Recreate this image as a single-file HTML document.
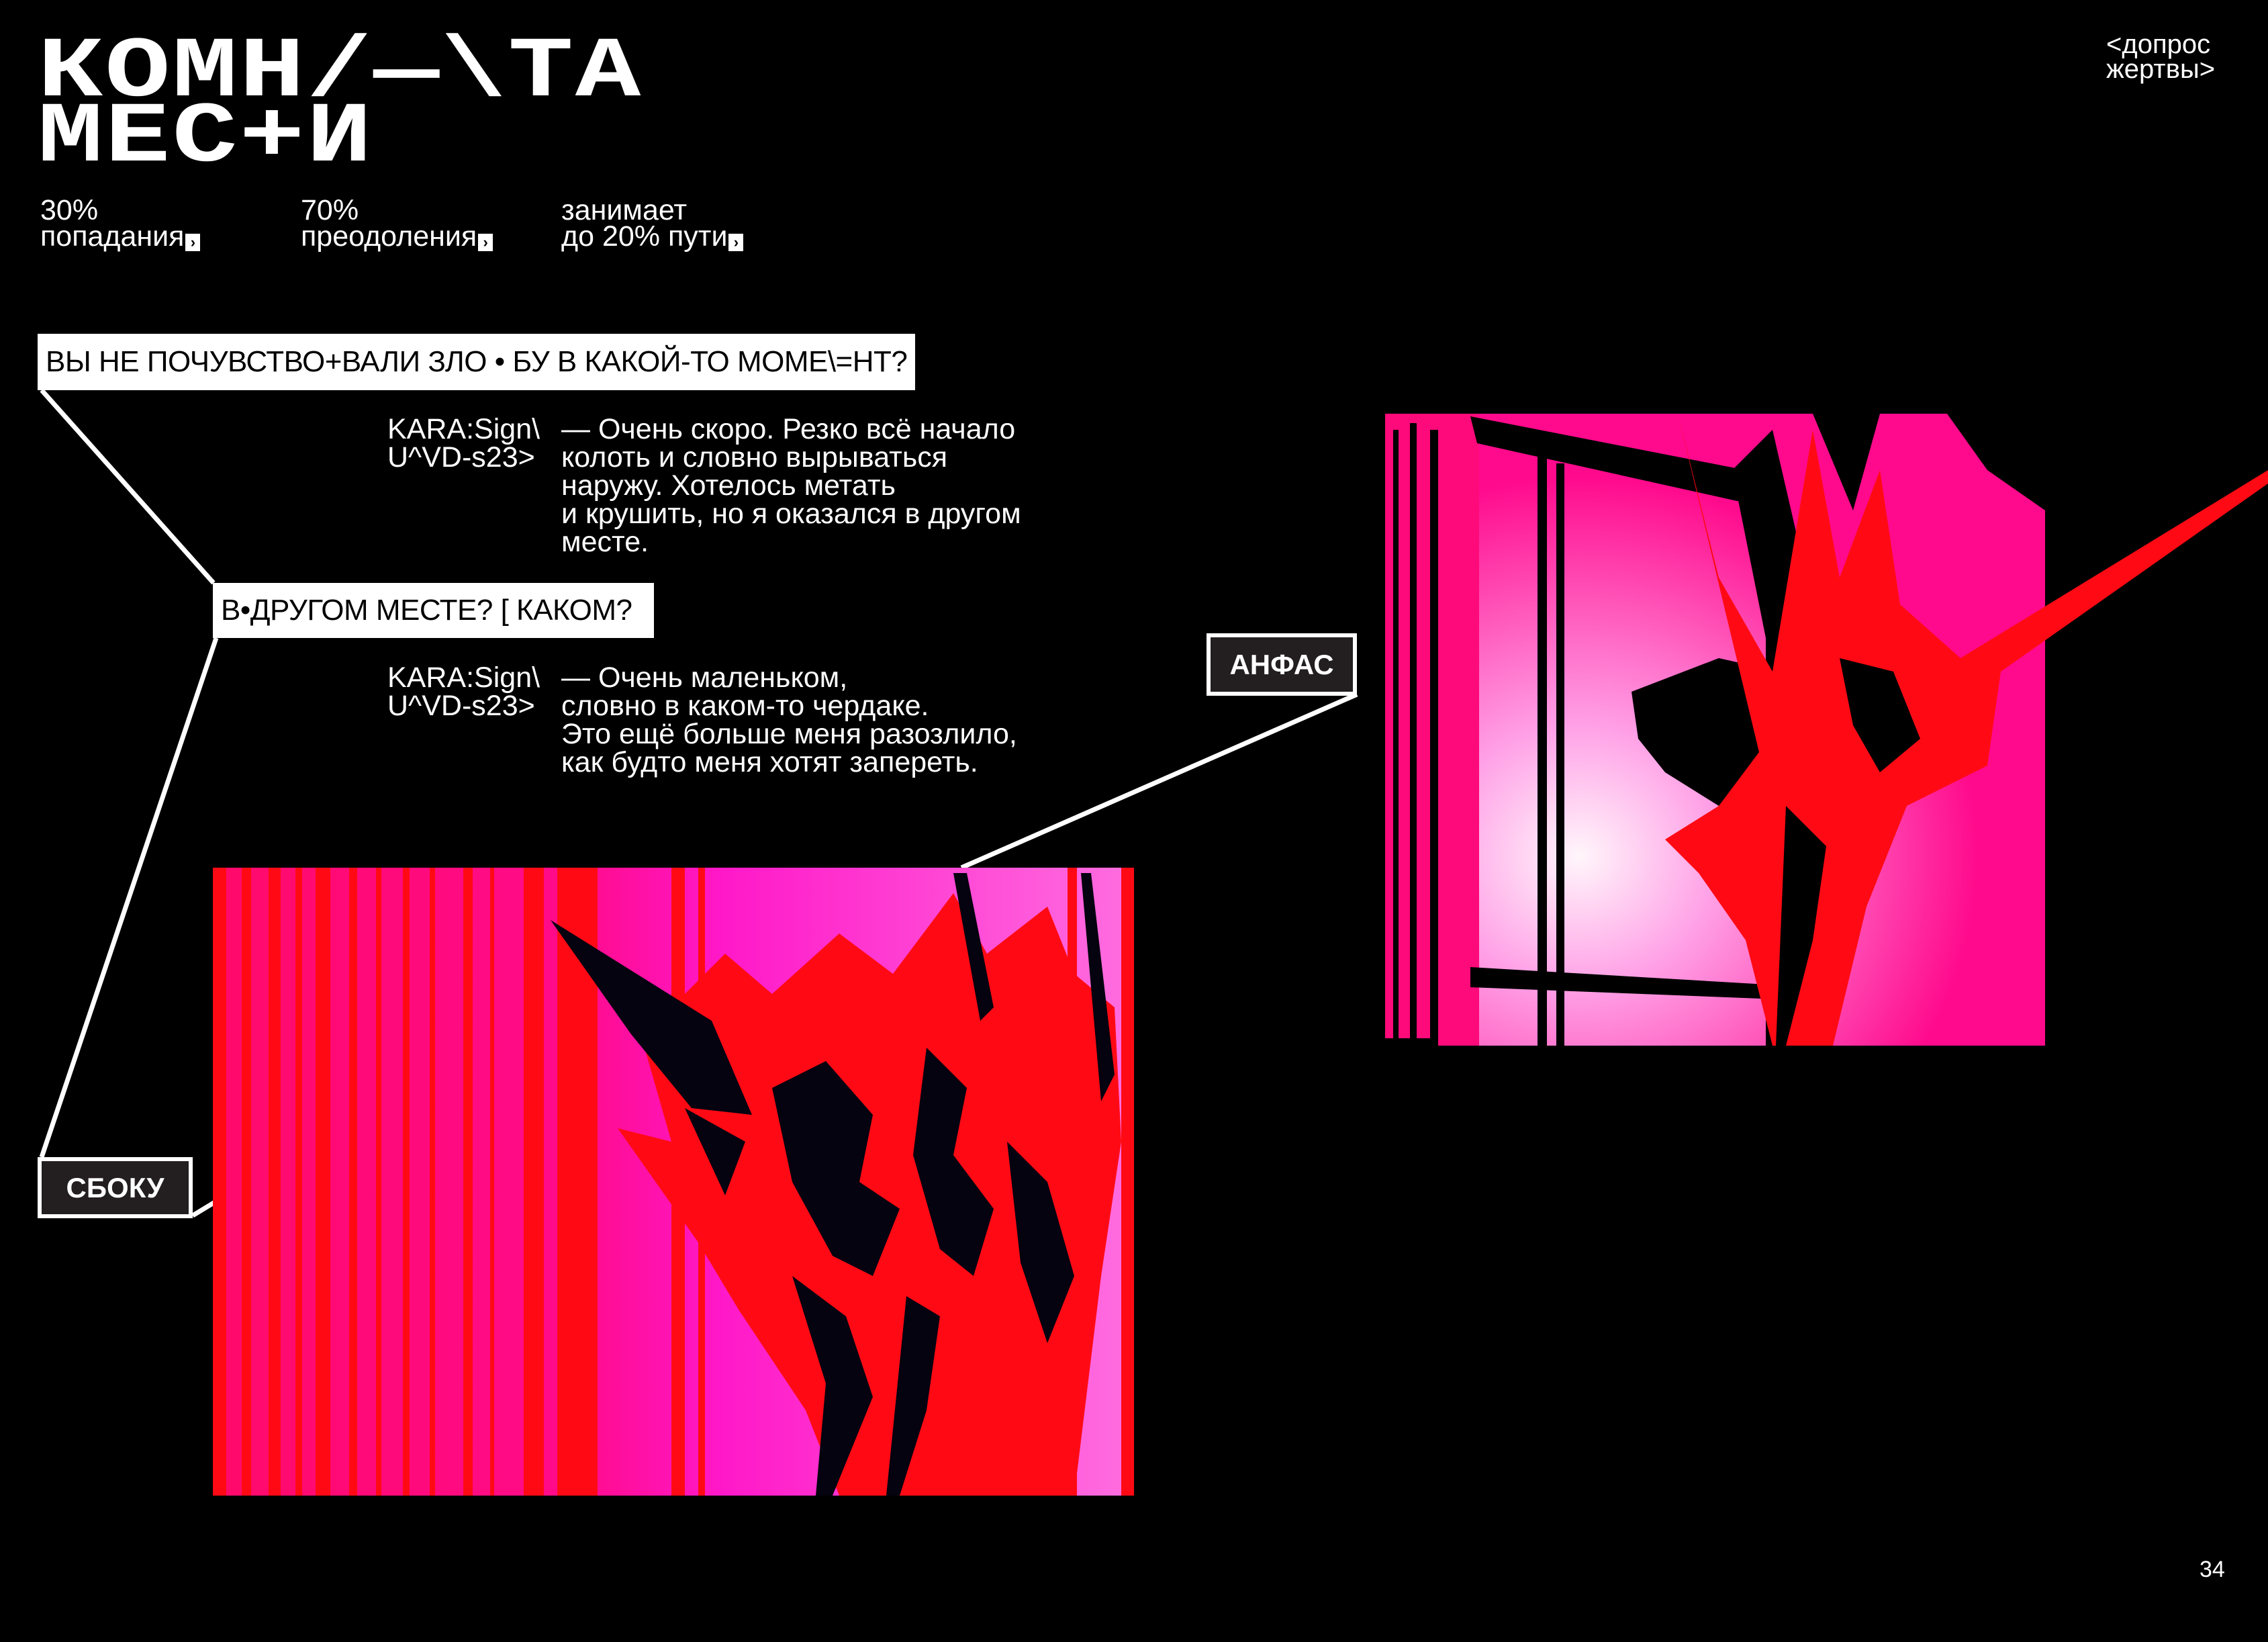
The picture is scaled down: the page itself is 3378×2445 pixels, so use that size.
<!DOCTYPE html>
<html><head><meta charset="utf-8">
<style>
html,body{margin:0;padding:0;background:#000;}
body{width:3378px;height:2445px;position:relative;overflow:hidden;font-family:"Liberation Sans","Noto Sans CJK SC",sans-serif;color:#fff;}
.a{position:absolute;white-space:nowrap;}
.title{font-family:"Liberation Mono","DejaVu Sans Mono",monospace;font-weight:bold;font-size:128px;line-height:97px;transform-origin:0 0;transform:scaleX(1.27);letter-spacing:2px;}
.st{font-size:43px;line-height:39px;}
.ar{display:inline-block;width:22px;height:26px;background:#fff;color:#000;font-size:22px;line-height:26px;text-align:center;font-weight:bold;vertical-align:-2px;margin-left:2px;}
.q{background:#fff;color:#000;font-size:44px;letter-spacing:-0.5px;box-sizing:border-box;padding-left:12px;display:flex;align-items:center;}
.ans{font-size:43px;line-height:42px;}
.lab{background:#231f20;border:6px solid #fff;box-sizing:border-box;font-weight:bold;font-size:42px;display:flex;align-items:center;justify-content:center;}
</style></head><body>

<svg class="a" style="left:0;top:0" width="3378" height="2445">
<defs>
<linearGradient id="g1" x1="0" y1="0" x2="1" y2="0">
<stop offset="0" stop-color="#ff0a6a"/><stop offset="0.4" stop-color="#ff0b8c"/><stop offset="0.55" stop-color="#ff18c8"/><stop offset="1" stop-color="#ff6ee0"/></linearGradient>
<radialGradient id="g2" cx="0.3" cy="0.7" r="0.6">
<stop offset="0" stop-color="#fff6fb"/><stop offset="0.35" stop-color="#ff9fe6"/><stop offset="1" stop-color="#ff0a8c"/></radialGradient>
</defs>
<polyline points="62,581 318,868" fill="none" stroke="#fff" stroke-width="7"/>
<polyline points="322,950 62,1723" fill="none" stroke="#fff" stroke-width="7"/>
<polyline points="287,1810 320,1790" fill="none" stroke="#fff" stroke-width="7"/>
<polyline points="2021,1034 1432,1292" fill="none" stroke="#fff" stroke-width="7"/>

<g>
<rect x="317" y="1292" width="1372" height="935" fill="url(#g1)"/>
<g fill="#ff0a14">
<rect x="317" y="1292" width="20" height="935"/><rect x="360" y="1292" width="14" height="935"/>
<rect x="400" y="1292" width="18" height="935"/><rect x="440" y="1292" width="10" height="935"/>
<rect x="470" y="1292" width="22" height="935"/><rect x="520" y="1292" width="12" height="935"/>
<rect x="560" y="1292" width="8" height="935"/><rect x="600" y="1292" width="10" height="935"/>
<rect x="640" y="1292" width="8" height="935"/><rect x="690" y="1292" width="14" height="935"/>
<rect x="730" y="1292" width="6" height="935"/><rect x="780" y="1292" width="30" height="935"/>
<rect x="830" y="1292" width="60" height="935"/><rect x="1000" y="1292" width="20" height="935"/>
<rect x="1040" y="1292" width="10" height="935"/><rect x="1590" y="1292" width="14" height="935"/>
<rect x="1670" y="1292" width="19" height="935"/>
</g>
<polygon fill="#ff0a14" points="820,1370 1000,1500 1080,1420 1150,1480 1250,1390 1330,1450 1420,1330 1470,1420 1560,1350 1600,1450 1660,1500 1670,1700 1640,1900 1600,2227 1250,2227 1200,2100 1100,1950 1040,1850 920,1680 1000,1700 960,1560"/>
<polygon fill="#05030f" points="820,1370 940,1540 1030,1650 1120,1660 1060,1520"/>
<polygon fill="#05030f" points="1150,1620 1230,1580 1300,1660 1280,1760 1340,1800 1300,1900 1240,1870 1180,1760"/>
<polygon fill="#05030f" points="1380,1560 1440,1620 1420,1720 1480,1800 1450,1900 1400,1860 1360,1720"/>
<polygon fill="#05030f" points="1500,1700 1560,1760 1600,1900 1560,2000 1520,1880"/>
<polygon fill="#05030f" points="1180,1900 1260,1960 1300,2080 1240,2227 1215,2227 1230,2060"/>
<polygon fill="#05030f" points="1020,1650 1110,1700 1080,1780"/>
<polygon fill="#05030f" points="1420,1300 1440,1300 1480,1500 1460,1520"/>
<polygon fill="#05030f" points="1610,1300 1625,1300 1660,1600 1640,1640"/>
<polygon fill="#05030f" points="1350,1930 1400,1960 1380,2100 1340,2227 1320,2227"/>
</g>

<g>
<rect x="2053" y="616" width="993" height="941" fill="url(#g2)"/>
<rect x="2053" y="616" width="150" height="941" fill="#ff0a7a"/>
<g fill="#000">
<rect x="2053" y="616" width="10" height="941"/><rect x="2075" y="640" width="8" height="917"/>
<rect x="2100" y="630" width="10" height="927"/><rect x="2130" y="640" width="12" height="917"/>
<rect x="2290" y="680" width="14" height="877"/><rect x="2318" y="690" width="12" height="867"/>
<rect x="2630" y="900" width="10" height="657"/>
<polygon points="2190,1440 2700,1470 2700,1490 2190,1470"/>
<polygon points="2190,620 2600,700 2650,760 2200,660"/>
<polygon points="2430,1030 2560,980 2650,1000 2700,1100 2640,1300 2560,1200 2480,1150 2440,1100"/>
<polygon points="2580,700 2640,640 2700,900 2640,1000"/>
<polygon points="2700,616 2800,616 2760,760"/>
<polygon points="2900,616 3046,616 3046,760 2960,700"/>
<rect x="2053" y="1546" width="80" height="11"/>
</g>
<polygon fill="#ff0a14" points="2500,620 2560,860 2640,1000 2700,640 2740,860 2800,700 2830,900 2920,980 3378,700 3378,720 2980,1000 2960,1140 2840,1200 2780,1350 2730,1557 2640,1557 2600,1400 2530,1300 2480,1250 2560,1200 2620,1120"/>
<polygon fill="#000" points="2740,980 2820,1000 2860,1100 2800,1150 2760,1080"/>
<polygon fill="#000" points="2660,1200 2720,1260 2700,1400 2660,1557 2645,1557"/>
</g>
</svg>

<div class="a title" style="left:56px;top:60px">КОМН/—\ТА<br>МЕС+И</div>

<div class="a st" style="left:60px;top:294px">30%<br>попадания<span class="ar">›</span></div>
<div class="a st" style="left:448px;top:294px">70%<br>преодоления<span class="ar">›</span></div>
<div class="a st" style="left:836px;top:294px">занимает<br>до 20% пути<span class="ar">›</span></div>

<div class="a" style="left:3137px;top:48px;font-size:40px;line-height:37px">&lt;допрос<br>жертвы&gt;</div>

<div class="a q" style="left:56px;top:497px;width:1307px;height:84px">ВЫ НЕ ПОЧУВСТВО+ВАЛИ ЗЛО • БУ В КАКОЙ-ТО МОМЕ\=НТ?</div>

<div class="a ans" style="left:577px;top:618px">KARA:Sign\<br>U^VD-s23&gt;</div>
<div class="a ans" style="left:836px;top:618px">— Очень скоро. Резко всё начало<br>колоть и словно вырываться<br>наружу. Хотелось метать<br>и крушить, но я оказался в другом<br>месте.</div>

<div class="a q" style="left:317px;top:868px;width:657px;height:82px">В•ДРУГОМ МЕСТЕ? [ КАКОМ?</div>

<div class="a ans" style="left:577px;top:988px">KARA:Sign\<br>U^VD-s23&gt;</div>
<div class="a ans" style="left:836px;top:988px">— Очень маленьком,<br>словно в каком-то чердаке.<br>Это ещё больше меня разозлило,<br>как будто меня хотят запереть.</div>

<div class="a lab" style="left:56px;top:1723px;width:231px;height:91px">СБОКУ</div>
<div class="a lab" style="left:1797px;top:943px;width:224px;height:93px">АНФАС</div>

<div class="a" style="left:3276px;top:2318px;font-size:34px">34</div>
</body></html>
